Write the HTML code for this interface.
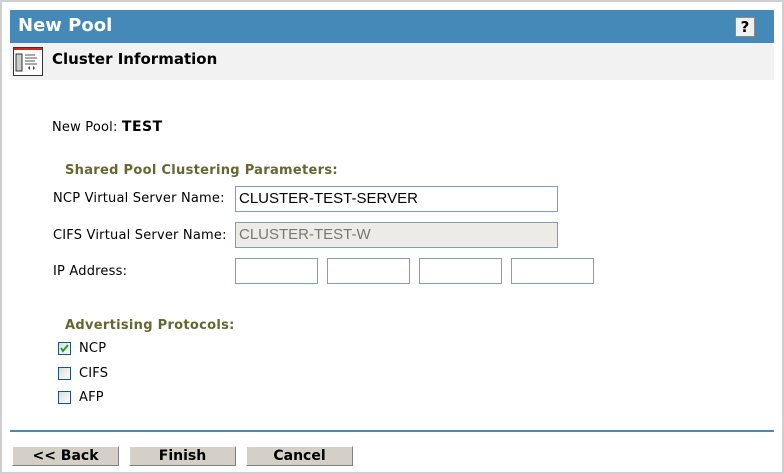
<!DOCTYPE html>
<html><head><style>
*{margin:0;padding:0;box-sizing:border-box}
body{width:784px;height:474px;background:#fff;font-family:"DejaVu Sans","Liberation Sans",sans-serif;font-size:13px;color:#000;position:relative;overflow:hidden}
.frame{position:absolute;left:0;top:0;width:784px;height:474px;border:2px solid #cfcfcf}
.a{position:absolute;white-space:nowrap}
.l{letter-spacing:0.2px}
.hdr{position:absolute;left:10px;top:10px;width:764px;height:33px;background:#4589b8}
.band{position:absolute;left:10px;top:43px;width:764px;height:37px;background:#f2f2f2}
.inp{position:absolute;height:26px;border:1px solid #7f9db9;background:#fff;font-family:"Liberation Sans",sans-serif;font-size:15px;padding:3px 0 0 3px}
.cb{position:absolute;left:58px;width:13px;height:13px;border:1px solid #1c5180;background:linear-gradient(135deg,#dcdcd7,#fff)}
.btn{position:absolute;top:446px;height:20px;background:#d4d0c8;border:1px solid;border-color:#fff #808080 #808080 #fff;font-weight:bold;font-size:14px;text-align:center;line-height:18px}
.sec{color:#666633;font-weight:bold;font-size:13px;letter-spacing:0.3px}
</style></head><body>
<div class="frame"></div>
<div class="hdr"></div>
<div class="a" style="left:18px;top:15px;color:#fff;font-weight:bold;font-size:18px">New Pool</div>
<div class="a" style="left:735px;top:17px;width:20px;height:20px;background:#f0f0f0;border:1px solid #888;text-align:center;font-weight:bold;font-size:15px;line-height:18px">?</div>
<div class="band"></div>
<svg class="a" style="left:13px;top:47px" width="30" height="29" viewBox="0 0 30 29">
<rect x="0.5" y="0.5" width="29" height="28" fill="#fff" stroke="#333"/>
<rect x="1" y="1" width="28" height="2" fill="#d22"/>
<rect x="3" y="7" width="6" height="17" fill="#ccc" stroke="#333"/>
<path d="M12 8h10M12 11h12M12 14h10M12 17h12" stroke="#555"/>
<path d="M17 19l-2 2 2 2zM20 19l2 2-2 2z" fill="#333"/>
</svg>
<div class="a" style="left:52px;top:50px;font-weight:bold;font-size:15px">Cluster Information</div>
<div class="a l" style="left:52px;top:119px">New Pool: <b style="font-size:14px;letter-spacing:0.5px">TEST</b></div>
<div class="a sec" style="left:65px;top:163px">Shared Pool Clustering Parameters:</div>
<div class="a l" style="left:53px;top:191px">NCP Virtual Server Name:</div>
<div class="inp" style="left:235px;top:186px;width:323px">CLUSTER-TEST-SERVER</div>
<div class="a l" style="left:53px;top:228px">CIFS Virtual Server Name:</div>
<div class="inp" style="left:235px;top:222px;width:323px;background:#ecebe6;color:#777">CLUSTER-TEST-W</div>
<div class="a l" style="left:53px;top:264px">IP Address:</div>
<div class="inp" style="left:235px;top:258px;width:83px"></div>
<div class="inp" style="left:327px;top:258px;width:83px"></div>
<div class="inp" style="left:419px;top:258px;width:83px"></div>
<div class="inp" style="left:511px;top:258px;width:83px"></div>
<div class="a sec" style="left:65px;top:318px">Advertising Protocols:</div>
<div class="cb" style="top:342px"><svg width="11" height="11" style="position:absolute;left:0;top:0"><path d="M2 5l2 3 5-6" stroke="#21a121" stroke-width="2" fill="none"/></svg></div>
<div class="a l" style="left:79px;top:341px">NCP</div>
<div class="cb" style="top:367px"></div>
<div class="a l" style="left:79px;top:366px">CIFS</div>
<div class="cb" style="top:391px"></div>
<div class="a l" style="left:79px;top:390px">AFP</div>
<div class="a" style="left:10px;top:430px;width:764px;height:2px;background:#4589b8"></div>
<div class="btn" style="left:12px;width:107px">&lt;&lt; Back</div>
<div class="btn" style="left:129px;width:107px">Finish</div>
<div class="btn" style="left:246px;width:107px">Cancel</div>
</body></html>
